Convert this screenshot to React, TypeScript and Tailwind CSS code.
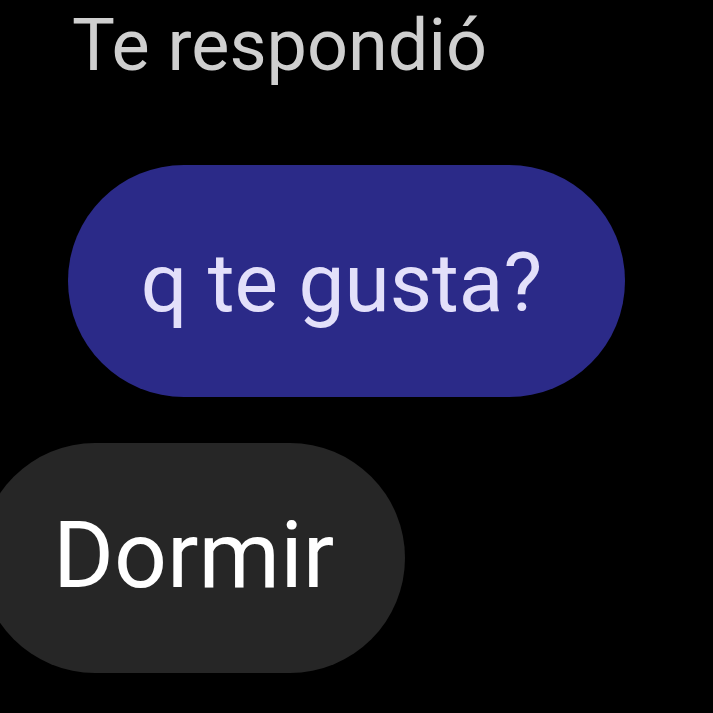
export default function App() {
  return (
    <div className="h-[713px] w-[713px] overflow-hidden bg-black font-['Roboto',sans-serif]">
      <div className="flex flex-col items-start pt-[6px]">
        <p className="ml-[72px] text-[72px] leading-[80px] text-[#cfcfcf]">
          Te respondió
        </p>
        <div className="ml-[68px] mt-[79px] flex h-[232px] w-[557px] items-center justify-center rounded-full bg-[#2b2a88] pr-[10px] pt-[4px]">
          <span className="text-[82px] leading-none text-[#e3e0fa]">q te gusta?</span>
        </div>
        <div className="-ml-[20px] mt-[46px] flex h-[230px] w-[425px] items-center rounded-full bg-[#262626] pb-[6px] pl-[73px]">
          <span className="text-[93px] leading-none text-white">Dormir</span>
        </div>
      </div>
    </div>
  );
}
